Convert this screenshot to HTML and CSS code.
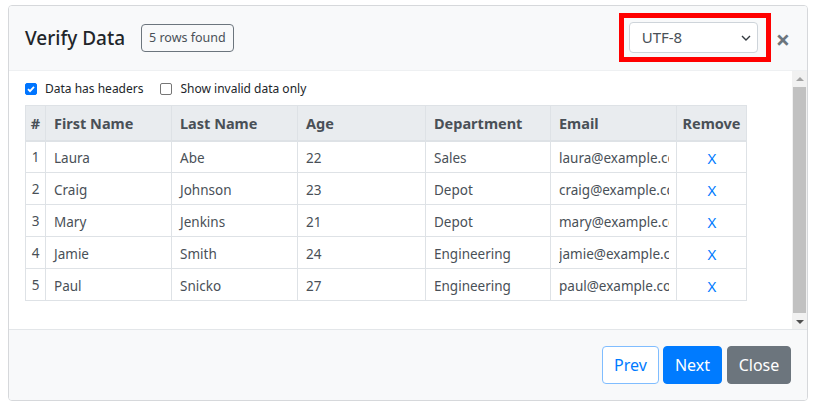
FILE: index.html
```html
<!DOCTYPE html>
<html>
<head>
<meta charset="utf-8">
<link rel="stylesheet" href="styles.css">
</head>
<body>
<div class="modal">
  <div class="modal-header">
    <div class="title-group">
      <h5 class="title">Verify Data</h5>
      <span class="badge">5 rows found</span>
    </div>
    <div class="header-right">
      <div class="highlight">
        <div class="select">
          <span>UTF-8</span>
          <svg class="chev" width="10" height="6" viewBox="0 0 10 6"><path d="M1 1l4 4 4-4" fill="none" stroke="#343a40" stroke-width="1.4"/></svg>
        </div>
      </div>
      <span class="close">×</span>
    </div>
  </div>
  <div class="modal-body">
    <div class="scroll-content">
      <div class="checks">
        <label class="check"><span class="box checked"><svg width="10" height="10" viewBox="0 0 10 10"><path d="M2 5.2l2 2 4-4.4" fill="none" stroke="#fff" stroke-width="1.8"/></svg></span>Data has headers</label>
        <label class="check"><span class="box"></span>Show invalid data only</label>
      </div>
      <table class="data">
        <thead>
          <tr><th class="c-num">#</th><th class="c-w">First Name</th><th class="c-w">Last Name</th><th class="c-age">Age</th><th class="c-dep">Department</th><th class="c-w">Email</th><th class="c-rm">Remove</th></tr>
        </thead>
        <tbody>
          <tr><td class="c-num">1</td><td>Laura</td><td>Abe</td><td>22</td><td>Sales</td><td><div class="clip">laura@example.com</div></td><td class="rm">X</td></tr>
          <tr><td class="c-num">2</td><td>Craig</td><td>Johnson</td><td>23</td><td>Depot</td><td><div class="clip">craig@example.com</div></td><td class="rm">X</td></tr>
          <tr><td class="c-num">3</td><td>Mary</td><td>Jenkins</td><td>21</td><td>Depot</td><td><div class="clip">mary@example.com</div></td><td class="rm">X</td></tr>
          <tr><td class="c-num">4</td><td>Jamie</td><td>Smith</td><td>24</td><td>Engineering</td><td><div class="clip">jamie@example.com</div></td><td class="rm">X</td></tr>
          <tr><td class="c-num">5</td><td>Paul</td><td>Snicko</td><td>27</td><td>Engineering</td><td><div class="clip">paul@example.com</div></td><td class="rm">X</td></tr>
        </tbody>
      </table>
    </div>
    <div class="scrollbar">
      <div class="arrow up"></div>
      <div class="track"><div class="thumb"></div></div>
      <div class="arrow down"></div>
    </div>
  </div>
  <div class="modal-footer">
    <button class="btn btn-outline">Prev</button>
    <button class="btn btn-primary">Next</button>
    <button class="btn btn-secondary">Close</button>
  </div>
</div>
</body>
</html>
```
FILE: styles.css
```css
* { box-sizing: border-box; }
html, body { margin: 0; padding: 0; background: #fff; }
body {
  font-family: "Noto Sans", "Open Sans", sans-serif;
  color: #212529;
  padding: 5px 8px 4px 8px;
}
.modal {
  width: 800px;
  height: 396px;
  border: 1px solid #d6d8db;
  border-radius: 4px;
  display: flex;
  flex-direction: column;
  overflow: hidden;
}
.modal-header {
  height: 64px;
  background: #f8f9fa;
  display: flex;
  align-items: center;
  justify-content: space-between;
  padding: 0 17px 0 16px;
  flex: none;
}
.title-group { display: flex; align-items: center; gap: 16px; }
.title {
  margin: 0;
  font-size: 19px;
  font-weight: 500;
  line-height: 1;
  color: #212529;
}
.badge {
  display: inline-block;
  border: 1px solid #6c757d;
  border-radius: 4px;
  font-size: 12.5px;
  color: #495057;
  height: 28px;
  line-height: 26px;
  padding: 0 7px;
}
.header-right { display: flex; align-items: center; gap: 5px; margin-top: -2px; }
.highlight {
  flex: none;
  border: 5px solid #ff0000;
  padding: 4px 8px 4px 5px;
  width: 152px;
  height: 49px;
}
.select {
  height: 31px;
  width: 129px;
  border: 1px solid #ced4da;
  border-radius: 4px;
  background: #fff;
  display: flex;
  align-items: center;
  justify-content: space-between;
  padding: 0 6px 0 12px;
  font-size: 15px;
  color: #495057;
}
.chev { margin-top: 1px; }
.close {
  flex: none;
  font-size: 25px;
  font-weight: 700;
  color: #6c757d;
  line-height: 1;
  margin-top: 4px;
}
.modal-body {
  height: 259px;
  display: flex;
  border-top: 1px solid #eef0f2;
  flex: none;
}
.scroll-content {
  flex: 1;
  padding: 10px 16px 0 16px;
}
.checks { display: flex; gap: 17px; height: 24px; align-items: flex-start; }
.check {
  display: flex;
  align-items: center;
  gap: 8px;
  font-size: 12px;
  color: #212529;
  line-height: 16px;
}
.box {
  width: 12px;
  height: 12px;
  border: 1px solid #767676;
  border-radius: 2px;
  background: #fff;
  display: inline-flex;
  align-items: center;
  justify-content: center;
}
.box.checked { background: #0075ff; border-color: #0075ff; }
table.data {
  border-collapse: collapse;
  table-layout: fixed;
  width: 722px;
  font-size: 13.5px;
  color: #495057;
}
table.data th, table.data td {
  border: 1px solid #dee2e6;
  text-align: left;
  padding: 0 7px 0 8px;
  white-space: nowrap;
  overflow: hidden;
}
table.data th {
  background: #e9ecef;
  height: 35px;
  font-weight: 700;
  font-size: 14.5px;
  border-bottom: 2px solid #dee2e6;
}
table.data td { height: 32px; padding-top: 2px; }
.c-num { width: 20px; padding: 0 !important; text-align: center !important; }
.c-w { width: 126px; }
.c-age { width: 128px; }
.c-dep { width: 125px; }
.c-rm { padding: 0 2px !important; text-align: center !important; }
.clip { overflow: hidden; width: 110px; }
.rm { color: #007bff; text-align: center !important; font-size: 15px; }
.scrollbar {
  width: 15px;
  background: #f1f1f1;
  display: flex;
  flex-direction: column;
}
.arrow { height: 15px; display: flex; align-items: center; justify-content: center; }
.arrow::before {
  content: "";
  border-left: 4px solid transparent;
  border-right: 4px solid transparent;
}
.arrow.up::before { border-bottom: 4px solid #a3a3a3; }
.arrow.down::before { border-top: 4px solid #505050; }
.track { flex: 1; padding: 1px 1px; }
.thumb { background: #c1c1c1; height: 100%; }
.modal-footer {
  flex: 1;
  background: #f8f9fa;
  border-top: 1px solid #e3e6e9;
  display: flex;
  justify-content: flex-end;
  align-items: center;
  gap: 4px;
  padding: 0 16px 0 0;
}
.btn {
  font-family: inherit;
  font-size: 16px;
  height: 38px;
  border-radius: 4px;
  padding: 0 8px;
  border: 1px solid transparent;
  line-height: 1;
}
.btn-outline { background: #fff; color: #007bff; border-color: #80bdff; width: 57px; }
.btn-primary { background: #007bff; color: #fff; border-color: #007bff; width: 59px; }
.btn-secondary { background: #6c757d; color: #fff; border-color: #6c757d; width: 64px; margin-left: 1px; }
```
